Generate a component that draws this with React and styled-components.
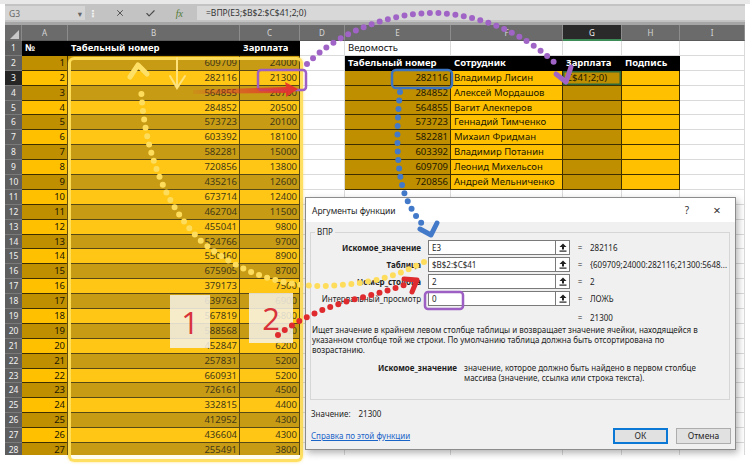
import React from "react";
import styled, { createGlobalStyle } from "styled-components";
import { X, Check } from "lucide-react";

const GlobalStyle = createGlobalStyle`
  html, body {
    margin: 0;
    padding: 0;
    background: #fff;
  }
  body {
    font-family: "Noto Sans", "DejaVu Sans", sans-serif;
  }
`;

const leftRows = [
  [1, 609709, 24000], [2, 282116, 21300], [3, 564855, 20700], [4, 284852, 20500],
  [5, 573723, 20100], [6, 603392, 18100], [7, 582281, 15000], [8, 720856, 13800],
  [9, 435216, 12600], [10, 673714, 12400], [11, 462704, 11500], [12, 455041, 9800],
  [13, 524766, 9700], [14, 550460, 8900], [15, 675905, 8700], [16, 379173, 7500],
  [17, 639763, 6900], [18, 567819, 6800], [19, 588568, 6500], [20, 452847, 6200],
  [21, 257831, 5200], [22, 660931, 5200], [23, 726161, 4500], [24, 332815, 4400],
  [25, 412952, 4300], [26, 436604, 4300], [27, 255491, 3800],
];

const staff = [
  [282116, "Владимир Лисин"],
  [284852, "Алексей Мордашов"],
  [564855, "Вагит Алекперов"],
  [573723, "Геннадий Тимченко"],
  [582281, "Михаил Фридман"],
  [603392, "Владимир Потанин"],
  [609709, "Леонид Михельсон"],
  [720856, "Андрей Мельниченко"],
];

const tones = {
  dark: { bg: "#bf8f00", fg: "#211800", line: "#3d2e00" },
  bright: { bg: "#ffc000", fg: "#211800", line: "#3d2e00" },
  black: { bg: "#000", fg: "#fff", line: "#000" },
  white: { bg: "#fff", fg: "#111", line: "#dadada" },
};

const Frame = styled.div`
  position: relative;
  width: 750px;
  height: 474px;
  overflow: hidden;
  background: #fff;
  display: flex;
  flex-direction: column;
`;

const TopStrip = styled.div`
  height: 4px;
  background: #e8e8e8;
`;

const FormulaBar = styled.div`
  height: 18px;
  margin: 0 5px;
  background: #c3c3c3;
  display: flex;
  align-items: center;
  color: #555;
  font-size: 8.5px;
`;

const NameBox = styled.div`
  width: 73px;
  height: 14px;
  padding: 0 3px 0 4px;
  background: #d5d5d5;
  display: flex;
  align-items: center;
  justify-content: space-between;
  color: #666;
`;

const Grip = styled.div`
  width: 16px;
  text-align: center;
  color: #f4f4f4;
  font-size: 10px;
  font-weight: bold;
`;

const FxButtons = styled.div`
  width: 96px;
  height: 14px;
  display: flex;
  align-items: center;
  justify-content: space-around;
  padding: 0 4px;
  box-sizing: border-box;
  color: #4a4a4a;
`;

const FxMark = styled.span`
  font-family: "Liberation Serif", serif;
  font-style: italic;
  font-size: 10px;
  color: #4f7a33;
`;

const FormulaInput = styled.div`
  flex: 1;
  height: 14px;
  background: #d8d8d8;
  padding-left: 9px;
  line-height: 14px;
  color: #333;
`;

const BarGap = styled.div`
  height: 3px;
  margin: 0 5px;
  background: #a6a6a6;
`;

const Sheet = styled.div`
  margin: 0 5px;
  height: 430px;
  overflow: hidden;
  display: grid;
  grid-template-columns: 17px 46px 172px 60px 45px 106px 112px 59px 58px 65px;
  grid-template-rows: 16px;
  grid-auto-rows: 14.9px;
  font-size: 9.5px;
`;

const Corner = styled.div`
  background: #6b6b6b;
  border-right: 1px solid #8a8a8a;
  position: relative;
  &::after {
    content: "";
    position: absolute;
    right: 2px;
    bottom: 2px;
    border-left: 9px solid transparent;
    border-bottom: 9px solid #c8c8c8;
  }
`;

const ColHead = styled.div`
  background: ${(p) => (p.$active ? "#2a2a2a" : "#6b6b6b")};
  color: ${(p) => (p.$active ? "#f0f0f0" : "#d6d6d6")};
  border-right: 1px solid #8c8c8c;
  border-bottom: ${(p) => (p.$active ? "2px solid #3d8b57" : "1px solid #5a5a5a")};
  box-sizing: border-box;
  font-size: 8px;
  text-align: center;
  line-height: 16px;
`;

const RowHead = styled.div`
  background: ${(p) => (p.$active ? "#262626" : "#5e5e5e")};
  color: #f2f2f2;
  border-bottom: 1px solid #7a7a7a;
  box-sizing: border-box;
  font-size: 8.5px;
  text-align: center;
  line-height: 14px;
`;

const Cell = styled.div`
  background: ${(p) => tones[p.$tone].bg};
  color: ${(p) => tones[p.$tone].fg};
  border-right: 1px solid ${(p) => tones[p.$tone].line};
  border-bottom: 1px solid ${(p) => tones[p.$tone].line};
  box-sizing: border-box;
  font-weight: ${(p) => (p.$tone === "black" ? 700 : 400)};
  text-align: ${(p) => (p.$right ? "right" : "left")};
  padding: 0 2px 0 3px;
  line-height: 14px;
  white-space: nowrap;
  overflow: ${(p) => (p.$spill ? "visible" : "hidden")};
  position: relative;
  z-index: ${(p) => (p.$spill ? 2 : "auto")};
  box-shadow: ${(p) => (p.$selected ? "inset 0 0 0 1.5px #2f6b3c" : "none")};
`;

const Highlight = styled.div`
  position: absolute;
  left: 68px;
  top: 57px;
  width: 235px;
  height: 405px;
  box-sizing: border-box;
  border: 3px solid rgba(255, 222, 90, 0.95);
  border-radius: 6px;
  background: rgba(255, 236, 150, 0.14);
  box-shadow: 0 0 3px rgba(255, 210, 60, 0.6);
`;

const Badge = styled.div`
  position: absolute;
  left: ${(p) => p.$x}px;
  top: ${(p) => p.$y}px;
  width: ${(p) => p.$w}px;
  height: ${(p) => p.$h}px;
  background: rgba(246, 242, 230, 0.86);
  color: #d8333b;
  font-family: "Open Sans", sans-serif;
  font-size: 31px;
  display: flex;
  align-items: center;
  justify-content: center;
`;

const Dialog = styled.div`
  position: absolute;
  left: 305px;
  top: 197px;
  width: 431px;
  height: 253px;
  box-sizing: border-box;
  background: #f0f0f0;
  border: 1px solid #8c8c8c;
  box-shadow: 2px 3px 7px rgba(0, 0, 0, 0.3);
  display: flex;
  flex-direction: column;
  font-size: 8px;
  color: #1e1e1e;
`;

const TitleBar = styled.div`
  height: 24px;
  background: #fff;
  display: flex;
  align-items: center;
  padding: 0 3px 0 6px;
`;

const Title = styled.div`
  flex: 1;
  font-size: 8.5px;
`;

const TitleButton = styled.div`
  width: 30px;
  text-align: center;
  font-size: ${(p) => (p.$big ? 13 : 10)}px;
  color: #333;
`;

const GroupBox = styled.div`
  margin: 10px 5px 0 4px;
  border: 1px solid #d6d6d6;
  padding-bottom: 16px;
`;

const GroupLabel = styled.div`
  width: fit-content;
  margin: -6px 0 0 4px;
  padding: 0 2px;
  background: #f0f0f0;
  line-height: 10px;
`;

const ArgGrid = styled.div`
  display: grid;
  grid-template-columns: 117px 127px 15px 20px 1fr;
  grid-auto-rows: ${(p) => (p.$result ? 14 : 15)}px;
  row-gap: 2px;
  margin-top: ${(p) => (p.$result ? 5 : 3)}px;
  line-height: ${(p) => (p.$result ? 14 : 15)}px;
`;

const ArgLabel = styled.div`
  text-align: right;
  padding-right: 7px;
  font-weight: ${(p) => (p.$bold ? 700 : 400)};
  white-space: nowrap;
`;

const ArgInput = styled.div`
  background: #fff;
  border: 1px solid #7a7a7a;
  border-right: none;
  padding-left: 3px;
  line-height: 13px;
  white-space: nowrap;
  overflow: hidden;
`;

const PickButton = styled.div`
  background: #fff;
  border: 1px solid #7a7a7a;
  display: flex;
  align-items: center;
  justify-content: center;
`;

const Eq = styled.div`
  grid-column: 4;
  text-align: center;
`;

const ArgValue = styled.div`
  white-space: nowrap;
  overflow: hidden;
`;

const Description = styled.div`
  padding-left: 1px;
  line-height: 10px;
  white-space: nowrap;
`;

const ArgHelp = styled.div`
  display: grid;
  grid-template-columns: 146px 1fr;
  column-gap: 7px;
  margin-top: 8px;
  line-height: 10px;
`;

const HelpName = styled.div`
  text-align: right;
  font-weight: 700;
`;

const ValueLine = styled.div`
  margin: 9px 0 0 5px;
  line-height: 10px;
  span {
    margin-left: 8px;
  }
`;

const Footer = styled.div`
  margin-top: 8px;
  height: 17px;
  padding: 0 4px 0 5px;
  display: flex;
  align-items: center;
`;

const HelpLink = styled.a`
  flex: 1;
  color: #1a64c8;
  text-decoration: underline;
`;

const DialogButton = styled.div`
  width: 55px;
  height: 16px;
  box-sizing: border-box;
  margin-left: ${(p) => (p.$primary ? 0 : 8)}px;
  background: #e1e1e1;
  border: ${(p) => (p.$primary ? "2px solid #0a78d4" : "1px solid #adadad")};
  display: flex;
  align-items: center;
  justify-content: center;
  font-size: 8.5px;
`;

const Overlay = styled.svg`
  position: absolute;
  left: 0;
  top: 0;
  pointer-events: none;
`;

const PickIcon = () => (
  <svg width="8" height="9" viewBox="0 0 8 9">
    <path d="M4 0.5 L7.5 4 H5 V6.5 H3 V4 H0.5 Z" fill="#222" />
    <rect x="0.5" y="7.5" width="7" height="1.2" fill="#222" />
  </svg>
);

const dots = {
  fill: "none",
  strokeWidth: 6,
  strokeLinecap: "round",
  strokeDasharray: "0 8.5",
};

const Annotations = () => (
  <Overlay width="750" height="474" viewBox="0 0 750 474">
    <defs>
      <linearGradient id="redFade" x1="193" y1="0" x2="298" y2="0" gradientUnits="userSpaceOnUse">
        <stop offset="0" stopColor="#e5322d" stopOpacity="0.1" />
        <stop offset="1" stopColor="#e5322d" stopOpacity="1" />
      </linearGradient>
    </defs>

    {/* frames */}
    <rect x="258" y="70" width="48" height="20" rx="3" fill="none" stroke="#9d5fc4" strokeWidth="2.5" />
    <rect x="392" y="70" width="60" height="18" rx="4" fill="none" stroke="#3c74c4" strokeWidth="2.5" />
    <rect x="425" y="292" width="38" height="17" rx="3" fill="none" stroke="#9d5fc4" strokeWidth="2.5" />

    {/* pale yellow down arrow */}
    <path d="M177 58 V88 M170 76 L177 88 L185 76" stroke="#ffe27a" strokeWidth="2" fill="none" strokeLinecap="round" />

    {/* red arrow */}
    <path d="M193 90 L286 87 L285 82 L298 89 L286 97 L286 93 L193 94 Z" fill="url(#redFade)" />

    {/* purple dotted curve to G3 */}
    <path d="M307 64 C340 30 400 8 450 14 C500 20 535 44 556 64" stroke="#a064c6" {...dots} />
    <path d="M556 74 L566 82 L571 67" stroke="#a064c6" strokeWidth="5" fill="none" strokeLinecap="round" strokeLinejoin="round" />

    {/* blue dotted line to first argument */}
    <path d="M400 92 C396 130 396 170 405 195 C411 210 417 218 424 226" stroke="#4279c8" {...dots} />
    <path d="M420 229 L431 235 L437 223" stroke="#4279c8" strokeWidth="5" fill="none" strokeLinecap="round" strokeLinejoin="round" />

    {/* yellow dotted curve from table argument */}
    <path d="M424 262 C400 274 380 282 340 285 C290 290 240 275 200 240 C160 200 143 140 141 86" stroke="#ffdd5c" {...dots} />
    <path d="M130 77 L138 65 L147 74" stroke="#ffe066" strokeWidth="5" fill="none" strokeLinecap="round" strokeLinejoin="round" />

    {/* red dotted curve to column number */}
    <path d="M278 335 C300 318 330 305 360 298 C380 293 393 289 404 285" stroke="#df2a2e" {...dots} />
    <path d="M404 279 L417 280 L412 292" stroke="#df2a2e" strokeWidth="5" fill="none" strokeLinecap="round" strokeLinejoin="round" />
  </Overlay>
);

const colLetters = ["A", "B", "C", "D", "E", "F", "G", "H", "I"];

function renderRow(r) {
  const cells = [<RowHead key={`h${r}`} $active={r === 3}>{r}</RowHead>];

  if (r === 1) {
    cells.push(
      <Cell key="a1" $tone="black">№</Cell>,
      <Cell key="b1" $tone="black">Табельный номер</Cell>,
      <Cell key="c1" $tone="black">Зарплата</Cell>
    );
  } else {
    const [n, id, pay] = leftRows[r - 2];
    const tone = r % 2 === 0 ? "dark" : "bright";
    cells.push(
      <Cell key={`a${r}`} $tone={tone} $right>{n}</Cell>,
      <Cell key={`b${r}`} $tone={tone} $right>{id}</Cell>,
      <Cell key={`c${r}`} $tone={tone} $right>{pay}</Cell>
    );
  }

  cells.push(<Cell key={`d${r}`} $tone="white" />);

  if (r === 1) {
    cells.push(
      <Cell key="e1" $tone="white" $spill>Ведомость</Cell>,
      <Cell key="f1" $tone="white" />,
      <Cell key="g1" $tone="white" />,
      <Cell key="h1" $tone="white" />
    );
  } else if (r === 2) {
    cells.push(
      <Cell key="e2" $tone="black">Табельный номер</Cell>,
      <Cell key="f2" $tone="black">Сотрудник</Cell>,
      <Cell key="g2" $tone="black">Зарплата</Cell>,
      <Cell key="h2" $tone="black">Подпись</Cell>
    );
  } else if (r <= 10) {
    const [id, name] = staff[r - 3];
    cells.push(
      <Cell key={`e${r}`} $tone="dark" $right>{id}</Cell>,
      <Cell key={`f${r}`} $tone="bright">{name}</Cell>,
      <Cell key={`g${r}`} $tone="dark" $selected={r === 3}>{r === 3 ? "C$41;2;0)" : ""}</Cell>,
      <Cell key={`h${r}`} $tone="bright" />
    );
  } else {
    ["e", "f", "g", "h"].forEach((c) => cells.push(<Cell key={`${c}${r}`} $tone="white" />));
  }

  cells.push(<Cell key={`i${r}`} $tone="white" />);
  return cells;
}

const args = [
  { label: "Искомое_значение", bold: true, input: "E3", value: "282116" },
  { label: "Таблица", bold: true, input: "$B$2:$C$41", value: "{609709;24000:282116;21300:5648..." },
  { label: "Номер_столбца", bold: true, input: "2", value: "2" },
  { label: "Интервальный_просмотр", bold: false, input: "0", value: "ЛОЖЬ" },
];

const FunctionDialog = () => (
  <Dialog>
    <TitleBar>
      <Title>Аргументы функции</Title>
      <TitleButton>?</TitleButton>
      <TitleButton $big>×</TitleButton>
    </TitleBar>
    <GroupBox>
      <GroupLabel>ВПР</GroupLabel>
      <ArgGrid>
        {args.map((a) => (
          <React.Fragment key={a.label}>
            <ArgLabel $bold={a.bold}>{a.label}</ArgLabel>
            <ArgInput>{a.input}</ArgInput>
            <PickButton>
              <PickIcon />
            </PickButton>
            <Eq>=</Eq>
            <ArgValue>{a.value}</ArgValue>
          </React.Fragment>
        ))}
      </ArgGrid>
      <ArgGrid $result>
        <Eq>=</Eq>
        <ArgValue>21300</ArgValue>
      </ArgGrid>
      <Description>
        Ищет значение в крайнем левом столбце таблицы и возвращает значение ячейки, находящейся в
        <br />
        указанном столбце той же строки. По умолчанию таблица должна быть отсортирована по
        <br />
        возрастанию.
      </Description>
      <ArgHelp>
        <HelpName>Искомое_значение</HelpName>
        <div>
          значение, которое должно быть найдено в первом столбце
          <br />
          массива (значение, ссылка или строка текста).
        </div>
      </ArgHelp>
    </GroupBox>
    <ValueLine>
      Значение:<span>21300</span>
    </ValueLine>
    <Footer>
      <HelpLink href="#">Справка по этой функции</HelpLink>
      <DialogButton $primary>ОК</DialogButton>
      <DialogButton>Отмена</DialogButton>
    </Footer>
  </Dialog>
);

const App = () => {
  const rows = [];
  for (let r = 1; r <= 28; r++) rows.push(...renderRow(r));

  return (
    <Frame>
      <GlobalStyle />
      <TopStrip />
      <FormulaBar>
        <NameBox>
          G3 <span>▾</span>
        </NameBox>
        <Grip>⋮</Grip>
        <FxButtons>
          <X size={10} strokeWidth={2.2} />
          <Check size={11} strokeWidth={2.4} />
          <FxMark>fx</FxMark>
        </FxButtons>
        <FormulaInput>=ВПР(E3;$B$2:$C$41;2;0)</FormulaInput>
      </FormulaBar>
      <BarGap />
      <Sheet>
        <Corner />
        {colLetters.map((c) => (
          <ColHead key={c} $active={c === "G"}>
            {c}
          </ColHead>
        ))}
        {rows}
      </Sheet>
      <Highlight />
      <Badge $x={170} $y={295} $w={40} $h={53}>1</Badge>
      <Badge $x={249} $y={293} $w={44} $h={50}>2</Badge>
      <FunctionDialog />
      <Annotations />
    </Frame>
  );
};

export default App;
